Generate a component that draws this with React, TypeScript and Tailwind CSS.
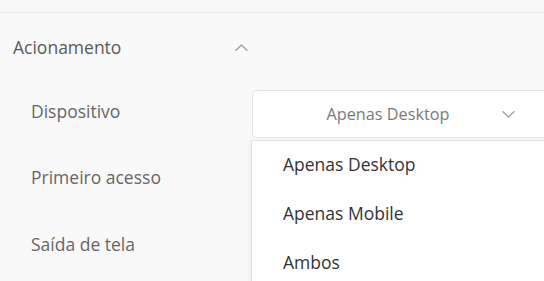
import React from "react";

function ChevronUp() {
  return (
    <svg width="13" height="7" viewBox="0 0 13 7" fill="none">
      <path d="M1 6.2 L6.5 1 L12 6.2" stroke="#9a9a9a" strokeWidth="1.3" strokeLinecap="round" strokeLinejoin="round" />
    </svg>
  );
}

function ChevronDown() {
  return (
    <svg width="13" height="7" viewBox="0 0 13 7" fill="none">
      <path d="M1 0.8 L6.5 6 L12 0.8" stroke="#a0a0a0" strokeWidth="1.3" strokeLinecap="round" strokeLinejoin="round" />
    </svg>
  );
}

export default function App() {
  const font = { fontFamily: '"Open Sans", "Noto Sans", sans-serif' };
  return (
    <div
      className="relative w-[544px] h-[281px] overflow-hidden bg-[#f9f9f9] flex flex-col"
      style={font}
    >
      <div className="h-[12px] shrink-0 border-b border-[#ebebeb] box-content" />
      <div className="h-[68px] shrink-0 flex items-center pl-[13px]">
        <span className="w-[222px] text-[17.5px] text-[#5a5a5a]">Acionamento</span>
        <ChevronUp />
      </div>
      <div className="mt-[9px] h-[48px] shrink-0 flex items-center">
        <span className="w-[220px] pl-[31px] mb-[5px] box-content shrink-0 text-[17.5px] text-[#666666]">Dispositivo</span>
        <div className="ml-[1px] flex-1 h-[48px] bg-white border border-[#e4e4e4] rounded-l-[5px] border-r-0 flex items-center">
          <span className="flex-1 text-center pl-[50px] text-[16.25px] text-[#7a7a7a]">Apenas Desktop</span>
          <span className="w-[42px] pr-[29px] box-content flex justify-end">
            <ChevronDown />
          </span>
        </div>
      </div>
      <div className="h-[78px] shrink-0 flex items-center pl-[31px]">
        <span className="text-[17.5px] text-[#666666]">Primeiro acesso</span>
      </div>
      <div className="h-[56px] shrink-0 flex items-center pl-[31px]">
        <span className="text-[17.5px] text-[#666666]">Saída de tela</span>
      </div>

      <div className="absolute left-[251px] top-[140px] right-0 bottom-[-20px] bg-white border-l border-t border-[#e2e2e2] shadow-[0_2px_6px_rgba(0,0,0,0.08)]">
        <div className="-mt-[1px] flex flex-col">
          {["Apenas Desktop", "Apenas Mobile", "Ambos"].map((t) => (
            <div key={t} className="h-[49px] flex items-center pl-[31px] text-[17.5px] text-[#333333]">
              {t}
            </div>
          ))}
        </div>
      </div>
    </div>
  );
}
